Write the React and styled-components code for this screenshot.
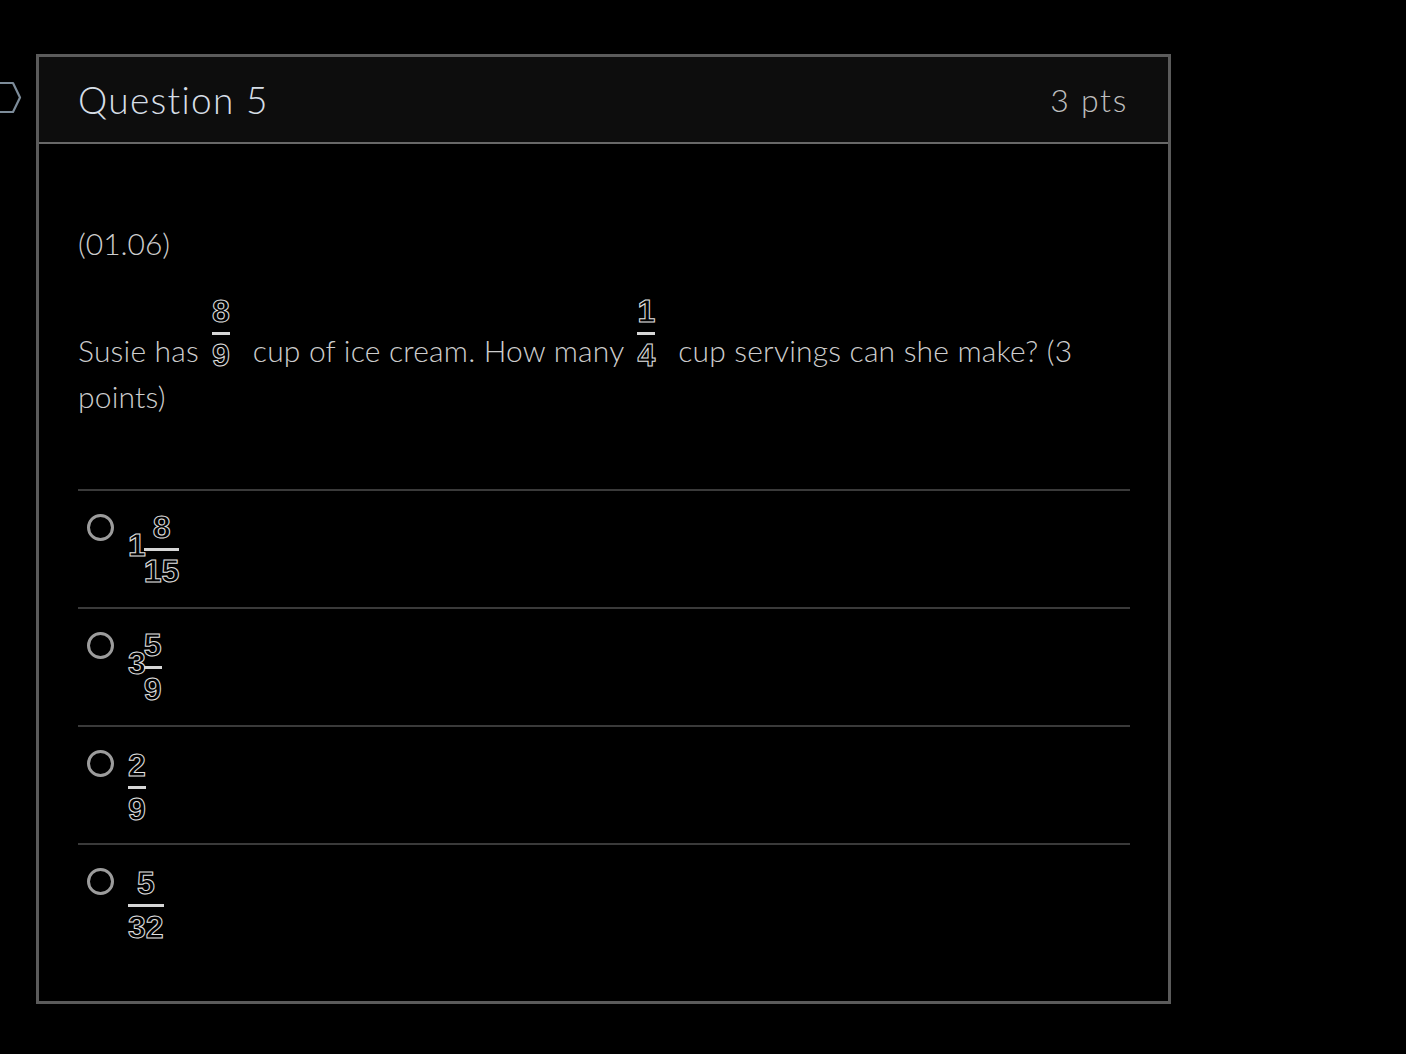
import React from 'react';
import styled, { createGlobalStyle } from 'styled-components';

const GlobalStyle = createGlobalStyle`
  html, body {
    margin: 0;
    padding: 0;
    background: #000;
  }
  body {
    font-family: Lato, "Open Sans", sans-serif;
  }
`;

const Page = styled.div`
  display: flex;
  align-items: flex-start;
  padding-top: 54px;
  min-height: 1054px;
  box-sizing: border-box;
  background: #000;
`;

const MarkerSlot = styled.div`
  width: 36px;
  padding-top: 27px;
  flex-shrink: 0;
  svg { display: block; }
`;

const Card = styled.section`
  width: 1135px;
  height: 950px;
  box-sizing: border-box;
  border: 3px solid #5b5b5b;
  display: flex;
  flex-direction: column;
`;

const Header = styled.header`
  height: 87px;
  box-sizing: border-box;
  background: #0d0d0d;
  border-bottom: 2px solid #686868;
  display: flex;
  align-items: center;
  justify-content: space-between;
  padding: 0 40px 0 39px;
`;

const Title = styled.h2`
  margin: 0;
  font-family: Lato, sans-serif;
  font-weight: 300;
  font-size: 37px;
  letter-spacing: 1.3px;
  color: #d6dee6;
`;

const Points = styled.span`
  font-family: Lato, sans-serif;
  font-weight: 300;
  font-size: 32px;
  letter-spacing: 1.7px;
  color: #bdbdbd;
`;

const Body = styled.div`
  padding: 76px 38px 0 39px;
  color: #cdcdcd;
  font-family: Lato, sans-serif;
  font-weight: 300;
  font-size: 30px;
`;

const Code = styled.p`
  margin: 0;
  line-height: 46px;
`;

const Question = styled.p`
  margin: 30px 0 0;
  line-height: 46px;
  letter-spacing: 0.2px;
`;

const Frac = styled.span`
  display: inline-flex;
  flex-direction: column;
  align-items: center;
  vertical-align: ${p => p.$raise || 0}px;
  margin: ${p => p.$inline ? '0 23px 0 13px' : '0'};
`;

const Digits = styled.span`
  display: block;
  font-family: "Liberation Sans", Arial, sans-serif;
  font-weight: 700;
  font-size: 32px;
  line-height: 31px;
  letter-spacing: 0;
  color: transparent;
  -webkit-text-stroke: 1px #e2e2e2;
`;

const Bar = styled.span`
  display: block;
  align-self: stretch;
  height: 3px;
  margin: 5px 0;
  background: #d6d6d6;
`;

const Mixed = styled.span`
  display: inline-flex;
  align-items: center;
  margin-top: -2px;
`;

const Whole = styled(Digits)`
  margin-right: -2px;
  padding-bottom: 8px;
`;

const Options = styled.ul`
  list-style: none;
  margin: 70px 0 0;
  padding: 0;
`;

const Option = styled.li`
  height: 118px;
  box-sizing: border-box;
  border-top: 2px solid #3a3a3a;
  display: flex;
  align-items: flex-start;
  gap: 14px;
  padding: 23px 0 0 9px;
`;

const Radio = styled.span`
  width: 27px;
  height: 27px;
  box-sizing: border-box;
  border: 3px solid #9c9c9c;
  border-radius: 50%;
  flex-shrink: 0;
`;

const Fraction = ({ num, den, raise, inline }) => (
  <Frac $raise={raise} $inline={inline}>
    <Digits>{num}</Digits>
    <Bar />
    <Digits>{den}</Digits>
  </Frac>
);

const answers = [
  { whole: '1', num: '8', den: '15' },
  { whole: '3', num: '5', den: '9' },
  { num: '2', den: '9' },
  { num: '5', den: '32' },
];

export default function App() {
  return (
    <>
      <GlobalStyle />
      <Page>
        <MarkerSlot>
          <svg width="36" height="34" viewBox="0 0 36 34">
            <polyline points="-2,2 13,2 20,16.5 13,31 -2,31" fill="none" stroke="#7d8c9a" strokeWidth="2.2" strokeLinejoin="round" />
          </svg>
        </MarkerSlot>
        <Card>
          <Header>
            <Title>Question 5</Title>
            <Points>3 pts</Points>
          </Header>
          <Body>
            <Code>(01.06)</Code>
            <Question>
              Susie has<Fraction num="8" den="9" raise={40} inline />cup of ice cream. How many<Fraction num="1" den="4" raise={40} inline />cup servings can she make? (3 points)
            </Question>
            <Options>
              {answers.map((a, i) => (
                <Option key={i}>
                  <Radio />
                  {a.whole ? (
                    <Mixed>
                      <Whole>{a.whole}</Whole>
                      <Fraction num={a.num} den={a.den} />
                    </Mixed>
                  ) : (
                    <Fraction num={a.num} den={a.den} />
                  )}
                </Option>
              ))}
            </Options>
          </Body>
        </Card>
      </Page>
    </>
  );
}
